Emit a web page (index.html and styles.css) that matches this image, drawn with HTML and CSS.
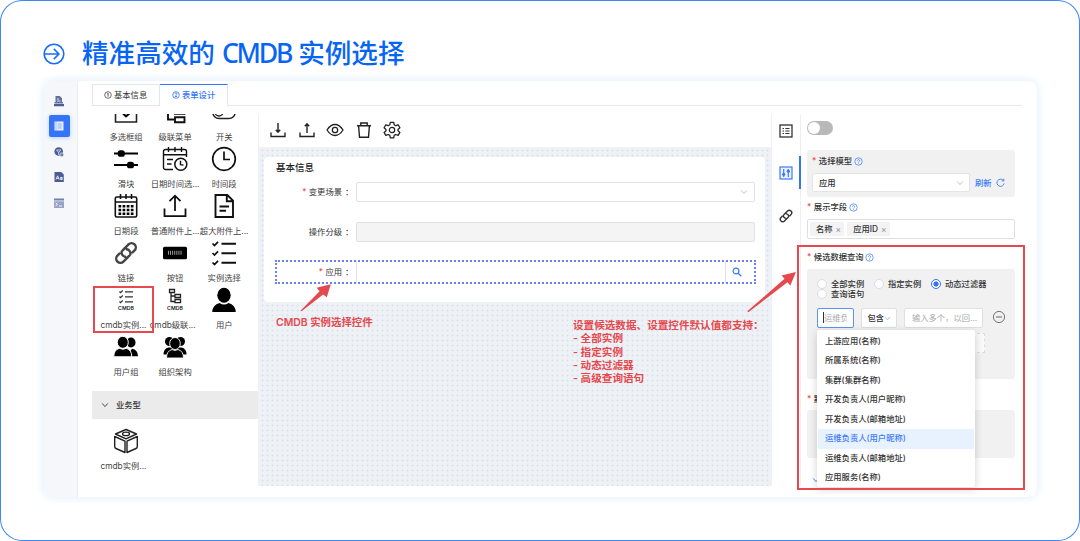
FILE: index.html
```html
<!DOCTYPE html>
<html lang="zh-CN">
<head>
<meta charset="utf-8">
<title>精准高效的 CMDB 实例选择</title>
<link rel="stylesheet" href="styles.css">
</head>
<body>
<svg width="0" height="0" class="defs">
  <symbol id="help" viewBox="0 0 10 10"><circle cx="5" cy="5" r="4.1" fill="none" stroke="currentColor" stroke-width=".8"/><path d="M3.7 4.1a1.3 1.2 0 1 1 1.9 1.1q-.6.3-.6.8M5 6.8v.8" fill="none" stroke="currentColor" stroke-width=".8"/></symbol>
  <symbol id="chev" viewBox="0 0 10 10"><path d="M1.500 3 5 7l3.500-4" fill="none" stroke="currentColor" stroke-width="1.100"/></symbol>
  <symbol id="link" viewBox="0 0 26 26"><g fill="none" stroke="currentColor" stroke-width="2.600" stroke-linecap="round" transform="rotate(-45 13 13)"><path d="M12.500 8.400H21.500a4.600 4.600 0 0 1 0 9.200h-3M13.500 17.600H4.500a4.600 4.600 0 0 1 0-9.200h3M10.800 8.600a4.600 4.600 0 0 0-1.300 6.600M15.200 17.400a4.600 4.600 0 0 0 1.300-6.600"/></g></symbol>
</svg>
<div class="frame">
  <header class="head">
    <svg class="head-icon" viewBox="0 0 22 22"><g fill="none" stroke="#1b6ef3" stroke-width="1.600"><circle cx="11" cy="11" r="9.800"/><path d="M1.500 11h14.200M10.800 5.900l5.100 5.100-5.100 5.100"/></g></svg>
    <h1 class="title">精准高效的 <span class="title-en">CMDB</span> 实例选择</h1>
  </header>
  <section class="app">
    <nav class="rail">
      <svg class="rail-icon" viewBox="0 0 12 12"><path d="M2.500 1h4.300L9 3.200V7h1v1.500H1.500V7h1z" fill="#64719f"/><path d="M1 9h10v2.200H1z" fill="#4c5c96"/><path d="M4 4h2M4 6h3.500" stroke="#fff" stroke-width=".8"/></svg>
      <span class="rail-active"><svg class="rail-icon" viewBox="0 0 12 12"><path d="M1.500 1.500h9v9h-9z" fill="#e8f0ff"/><path d="M3 1.500v9" stroke="#709ff9" stroke-width=".6"/><path d="M4.700 4h4M4.700 6h4M4.700 8h4" stroke="#6f9df8" stroke-width=".8"/></svg></span>
      <svg class="rail-icon" viewBox="0 0 12 12"><circle cx="5.700" cy="5.500" r="4.300" fill="#4c5c96"/><path d="M3.500 4h4.300L5.700 6.500zM5.700 6v3" stroke="#dce2f3" stroke-width=".8" fill="none"/><circle cx="8.800" cy="8.800" r="2" fill="#7581ad" stroke="#f5f7fb" stroke-width=".6"/></svg>
      <svg class="rail-icon" viewBox="0 0 12 12"><path d="M1.500 1h6.700l2.600 2.600V11H1.500z" fill="#4c5c96"/><path d="M3 8.500 4.600 4.800l1.600 3.700M3.600 7.300h2M9 6.200v2.500M7.300 7.500a.9.900 0 1 0 1.700 0 .9.900 0 1 0-1.700 0" stroke="#fff" stroke-width=".8" fill="none"/></svg>
      <svg class="rail-icon" viewBox="0 0 12 12"><path d="M1 1.500h10v2H1z" fill="#7380ab"/><path d="M1 4.200h10V11H1z" fill="#98a3c6"/><path d="m2.500 5.800 2 1.500-2 1.500M6 9h3" stroke="#fff" stroke-width=".9" fill="none"/></svg>
    </nav>
    <div class="main">
      <div class="tabs">
        <div class="tab"><svg class="num" viewBox="0 0 8 8"><circle cx="4" cy="4" r="3.300" fill="none" stroke="currentColor" stroke-width=".7"/><path d="M3.300 2.900 4.100 2.200v3.500" fill="none" stroke="currentColor" stroke-width=".8"/></svg>基本信息</div>
        <div class="tab tab-on"><svg class="num" viewBox="0 0 8 8"><circle cx="4" cy="4" r="3.300" fill="none" stroke="currentColor" stroke-width=".8"/><path d="M3 2.900a1 1 0 0 1 2 0Q5 3.600 3 5.500h2.200" fill="none" stroke="currentColor" stroke-width=".8"/></svg>表单设计</div>
        <div class="tab-rest"></div>
      </div>
      <div class="work">
        <aside class="palette">
          <div class="grid">
            <div class="cell"><svg class="ico" viewBox="0 0 26 26"><path d="M2.500 4v19h21V4z" fill="none" stroke="#222" stroke-width="1.600"/><path d="m9.500 14 3.500 3.300 4-3.300" fill="none" stroke="#000" stroke-width="2"/></svg><span>多选框组</span></div>
            <div class="cell"><svg class="ico" viewBox="0 0 26 26"><path d="M6 5v15.500h6M6 13.200h6" fill="none" stroke="#111" stroke-width="1.900"/><path d="M13 18.200h9.500v5H13zM13 10.200h9.500v4.500H13z" fill="#fff" stroke="#111" stroke-width="1.900"/></svg><span>级联菜单</span></div>
            <div class="cell"><svg class="ico" viewBox="0 0 26 26"><rect x="1.800" y="7" width="22.400" height="12.500" rx="6.250" fill="none" stroke="#222" stroke-width="1.500"/><circle cx="8" cy="13" r="4" fill="none" stroke="#222" stroke-width="1.400"/></svg><span>开关</span></div>

            <div class="cell"><svg class="ico" viewBox="0 0 26 26"><path d="M1 7.500h24M1 19h24" stroke="#000" stroke-width="1.800"/><rect x="4.800" y="4.200" width="7" height="6.600" rx="2.600"/><rect x="14" y="15.700" width="7" height="6.600" rx="2.600"/></svg><span>滑块</span></div>
            <div class="cell"><svg class="ico" viewBox="0 0 26 26"><path d="M11 23.500H3.500a2 2 0 0 1-2-2V5.500a2 2 0 0 1 2-2h19a2 2 0 0 1 2 2V11M1.500 8.800h23M6.500 1v5M13 1v5M19.500 1v5M5 13.500h6M5 18h4.500" fill="none" stroke="#111" stroke-width="1.400"/><circle cx="18.800" cy="18.300" r="6" fill="#fff" stroke="#111" stroke-width="1.500"/><path d="M18.500 14.800v3.800l3 .500" fill="none" stroke="#111" stroke-width="1.400"/></svg><span>日期时间选...</span></div>
            <div class="cell"><svg class="ico" viewBox="0 0 26 26"><circle cx="13" cy="13" r="11.300" fill="none" stroke="#111" stroke-width="1.700"/><path d="M13 5.500v8h6" fill="none" stroke="#111" stroke-width="1.700"/></svg><span>时间段</span></div>

            <div class="cell"><svg class="ico" viewBox="0 0 26 26"><rect x="2.300" y="4" width="21.400" height="20" rx="1.500" fill="none" stroke="#111" stroke-width="1.600"/><path d="M2.300 9h21.400M7.500 1v5M13 1v5M18.500 1v5" stroke="#111" stroke-width="1.600"/><path d="M5.500 13.200h15M5.500 17h15M5.500 20.800h15" stroke="#000" stroke-width="2.400" stroke-dasharray="2.700 1.400"/></svg><span>日期段</span></div>
            <div class="cell"><svg class="ico" viewBox="0 0 26 26"><path d="M2.500 15.500v7.700h21v-7.700M13 18V3M7.500 8.200 13 2.700l5.500 5.500" fill="none" stroke="#111" stroke-width="1.800"/></svg><span>普通附件上...</span></div>
            <div class="cell"><svg class="ico" viewBox="0 0 26 26"><path d="M4.500 2h11.800l5.700 5.700V24H4.500zM15.800 2.500v5.700h5.700" fill="none" stroke="#111" stroke-width="1.900"/><path d="M8.500 13.500h9.500M8.500 17.800h6.500" stroke="#111" stroke-width="2"/></svg><span>超大附件上...</span></div>

            <div class="cell"><svg class="ico" viewBox="0 0 26 26"><use href="#link" x="1" y="1" width="24" height="24"/></svg><span>链接</span></div>
            <div class="cell"><svg class="ico" viewBox="0 0 26 26"><rect x="1" y="6.800" width="24" height="12.500" rx="1.500"/><path d="M6 12.800h14.500" stroke="#aaa" stroke-width="4" stroke-dasharray=".9 1.200"/></svg><span>按钮</span></div>
            <div class="cell"><svg class="ico" viewBox="0 0 26 26"><path d="m1.500 3.500 2 2L7 1.800M1.500 13l2 2L7 11.300M1.500 22.500l2 2L7 20.800" fill="none" stroke="#111" stroke-width="1.700"/><path d="M10.500 3.800h14.500M10.500 13.300h14.500M10.500 22.800h14.500" stroke="#111" stroke-width="1.900"/></svg><span>实例选择</span></div>

            <div class="cell"><svg class="ico" viewBox="0 0 26 26"><path d="m6.500 4.500 1 1.200L9.800 3.500M6.500 9.500l1 1.200 2.300-2.200M6.500 14.500l1 1.200 2.300-2.200M12 4.800h8M12 9.800h8M12 14.800h8" fill="none" stroke="#333" stroke-width="1.200"/><text x="13" y="22.500" class="ico-text">CMDB</text></svg><span class="pull">cmdb实例...</span></div>
            <div class="cell"><svg class="ico" viewBox="0 0 26 26"><path d="M7.500 2.500h5v3h-5zM9 5.500v9h4M9 9h4M13 7.500h5.500v3H13zM13 12.500h5.500v3.200H13z" fill="none" stroke="#222" stroke-width="1.300"/><text x="13" y="22.500" class="ico-text">CMDB</text></svg><span class="pull">cmdb级联...</span></div>
            <div class="cell"><svg class="ico" viewBox="0 0 26 26"><ellipse cx="13" cy="8.300" rx="6.700" ry="7.500"/><path d="M1.200 25q.3-7 7.300-9 4.500 3 9 0 7 2 7.300 9z"/></svg><span>用户</span></div>

            <div class="cell"><svg class="ico" viewBox="0 0 26 26"><ellipse cx="18" cy="8.500" rx="4.500" ry="5"/><path d="M14 22.300h11q0-6.500-6-7.500z"/><g stroke="#fff" stroke-width="1"><ellipse cx="9.800" cy="8.300" rx="5.500" ry="6"/><path d="M.8 22.800q0-7 5.600-8.500 3.500 2 6.800 0 5.600 1.500 5.600 8.500z"/></g></svg><span>用户组</span></div>
            <div class="cell"><svg class="ico" viewBox="0 0 26 26"><circle cx="7.500" cy="7.500" r="4.500"/><circle cx="18.500" cy="7.500" r="4.500"/><path d="M1.500 20.500q0-6 5-7h13q5 1 5 7z"/><g stroke="#fff" stroke-width=".9"><ellipse cx="13" cy="9.500" rx="5.300" ry="6"/><path d="M4.500 24q0-7 5.500-8.500 3 2 6 0 5.500 1.500 5.500 8.500z"/></g></svg><span>组织架构</span></div>
          </div>
          <div class="group"><svg class="chev" viewBox="0 0 10 10"><use href="#chev"/></svg>业务型</div>
          <div class="grid grid-2">
            <div class="cell"><svg class="ico" viewBox="0 0 26 26"><path d="M13 1.500 23.500 6 13 10.800 2.500 6zM1.700 8.500 12 13.200V24.500L3 20.500q-1.300-.5-1.300-2zM24.300 8.500 14 13.200V24.500l9-4q1.300-.5 1.300-2z" fill="none" stroke="#222" stroke-width="1.400" stroke-linejoin="round"/><ellipse cx="13" cy="5.900" rx="3.500" ry="1.700" fill="none" stroke="#222" stroke-width="1.300"/></svg><span class="pull">cmdb实例...</span></div>
          </div>
        </aside>

        <div class="center">
          <div class="tools">
            <svg class="tool" viewBox="0 0 18 18"><path d="M2 11.500v4h14v-4M9 2v9M6.800 8.800 9 11.200l2.200-2.400" fill="none" stroke="#222" stroke-width="1.400"/></svg>
            <svg class="tool" viewBox="0 0 18 18"><path d="M2 11.500v4h14v-4M9 12V3M6.800 5.200 9 2.800l2.200 2.400" fill="none" stroke="#222" stroke-width="1.400"/></svg>
            <svg class="tool" viewBox="0 0 18 18"><path d="M1 9q3.500-5.500 8-5.500T17 9q-3.500 5.500-8 5.500T1 9z" fill="none" stroke="#222" stroke-width="1.300"/><circle cx="9" cy="9" r="2.700" fill="none" stroke="#222" stroke-width="1.300"/></svg>
            <svg class="tool" viewBox="0 0 18 18"><path d="M2 4.800h14M5.800 4.500V2h6.400v2.500M3.600 5l.9 11.200h9L14.400 5" fill="none" stroke="#222" stroke-width="1.400"/></svg>
            <svg class="tool" viewBox="0 0 18 18"><path d="M7.300 1.300h3.400l.5 2.500 1.600.9 2.400-.9 1.700 3-1.900 1.600v1.400l1.900 1.600-1.700 3-2.400-.9-1.600.9-.5 2.400H7.300l-.5-2.400-1.600-.9-2.400.9-1.700-3L3 9.800V8.400L1.100 6.800l1.700-3 2.400.9 1.600-.9z" fill="none" stroke="#222" stroke-width="1.300" stroke-linejoin="round"/><circle cx="9" cy="9" r="2.700" fill="none" stroke="#222" stroke-width="1.200"/></svg>
          </div>
          <div class="canvas">
            <div class="form">
              <div class="form-title">基本信息</div>
              <div class="row"><div class="lab"><i>*</i>变更场景<b>：</b></div><div class="inp"><svg class="chev grey" viewBox="0 0 10 10"><use href="#chev"/></svg></div></div>
              <div class="row"><div class="lab">操作分级<b>：</b></div><div class="inp inp-off"></div></div>
              <div class="row row-sel"><div class="lab"><i>*</i>应用<b>：</b></div><div class="inp-open"></div><div class="find"><svg class="find-ico" viewBox="0 0 10 10"><circle cx="4" cy="4" r="2.900" fill="none" stroke="#3d7bf7" stroke-width="1.200"/><path d="m6 6 3.300 3.300" stroke="#3d7bf7" stroke-width="1.300"/></svg></div></div>
            </div>
          </div>
        </div>

        <div class="modes">
          <svg class="mode" viewBox="0 0 14 14"><rect x="1" y="1" width="12" height="12" fill="none" stroke="#333" stroke-width="1.300"/><path d="M3.500 4.500H5M3.500 7H5M3.500 9.500H5M6.300 4.500h4.200M6.300 7h4.200M6.300 9.500h4.200" stroke="#333" stroke-width="1.100"/></svg>
          <div class="mode-on"><svg class="mode" viewBox="0 0 14 14"><rect x="1" y="1" width="12" height="12" fill="#eaf2ff" stroke="#3d7bf7" stroke-width="1.200"/><path d="M4.700 3v8M9.300 3v8" stroke="#3d7bf7" stroke-width="1.200"/><circle cx="4.700" cy="8.300" r="1.600" fill="#3d7bf7"/><circle cx="9.300" cy="5.200" r="1.600" fill="#3d7bf7"/></svg></div>
          <svg class="mode" viewBox="0 0 26 26"><use href="#link"/></svg>
        </div>

        <div class="props">
          <div class="switch"><span></span></div>
          <div class="box box-model">
            <div class="cap"><i>*</i>选择模型<svg class="help" viewBox="0 0 10 10"><use href="#help"/></svg></div>
            <div class="line">
              <div class="select">应用<svg class="chev grey" viewBox="0 0 10 10"><use href="#chev"/></svg></div>
              <span class="refresh">刷新</span>
              <svg class="reload" viewBox="0 0 10 10"><path d="M8.300 2.900A4 4 0 1 0 9 6M8.700.8v2.500H6.300" fill="none" stroke="#3d7bf7" stroke-width="1"/></svg>
            </div>
          </div>
          <div class="cap cap-show"><i>*</i>展示字段<svg class="help" viewBox="0 0 10 10"><use href="#help"/></svg></div>
          <div class="tags"><span class="tag">名称<em>×</em></span><span class="tag">应用ID<em>×</em></span></div>
          <div class="cap cap-query"><i>*</i>候选数据查询<svg class="help" viewBox="0 0 10 10"><use href="#help"/></svg></div>
          <div class="box box-query">
            <div class="radios">
              <label class="radio"><span class="dot"></span>全部实例</label>
              <label class="radio"><span class="dot"></span>指定实例</label>
              <label class="radio"><span class="dot dot-on"></span>动态过滤器</label>
              <label class="radio"><span class="dot"></span>查询语句</label>
            </div>
            <div class="filter">
              <div class="f1"><span>运维负</span></div>
              <div class="f2">包含<svg class="f2-chev" viewBox="0 0 10 10"><use href="#chev"/></svg></div>
              <div class="f3">输入多个，以回...</div>
              <svg class="minus" viewBox="0 0 14 14"><circle cx="7" cy="7" r="5.600" fill="none" stroke="#666" stroke-width=".9"/><path d="M4 7h6" stroke="#666" stroke-width="1"/></svg>
            </div>
            <div class="add"></div>
          </div>
          <div class="cap cap-def"><i>*</i>默</div>
          <div class="box box-def"></div>
          <svg class="more" viewBox="0 0 10 10"><use href="#chev"/></svg>
        </div>
      </div>
    </div>
  </section>

  <ul class="menu">
    <li>上游应用(名称)</li>
    <li>所属系统(名称)</li>
    <li>集群(集群名称)</li>
    <li>开发负责人(用户昵称)</li>
    <li>开发负责人(邮箱地址)</li>
    <li class="on">运维负责人(用户昵称)</li>
    <li>运维负责人(邮箱地址)</li>
    <li>应用服务(名称)</li>
  </ul>

  <div class="mark mark-left"></div>
  <div class="mark mark-right"></div>
  <div class="note note-a">CMDB 实例选择控件</div>
  <div class="note note-b">设置候选数据、设置控件默认值都支持：<br>- 全部实例<br>- 指定实例<br>- 动态过滤器<br>- 高级查询语句</div>
  <svg class="arrows" viewBox="0 0 1080 541"><g fill="#e5484d"><path d="M300.500 310.800 319.600 291.200 316.600 287.800 330.800 284.200 326.800 297.300 323.200 294.500 301.500 311.300z"/><path d="M747.300 311.300 784.500 278.800 781.600 275.500 796 272 790.300 285.600 787.500 282.300 748.300 312.200z"/></g></svg>
</div>
</body>
</html>
```

FILE: styles.css
```css
* { box-sizing: border-box; }
body {
  margin: 0;
  background: #fff;
  font-family: Inter, "Noto Sans CJK SC", sans-serif;
  font-size: 8.3px;
  line-height: 12px;
  color: #333;
}
svg { display: block; flex: none; overflow: visible; }
i, em, b { font-style: normal; font-weight: inherit; }
.defs { position: absolute; }

.frame {
  position: relative;
  width: 1080px;
  height: 541px;
  border-radius: 22px;
  box-shadow: inset 0 0 0 1px #3f86f5;
  overflow: hidden;
}
.head { display: flex; align-items: flex-start; gap: 17px; height: 81px; padding: 26px 0 0 43px; }
.head-icon { width: 22px; height: 22px; margin-top: 17px; }
.title {
  margin: 7px 0 0;
  font-family: "Noto Sans", "Noto Sans CJK SC", sans-serif;
  font-size: 26.600px;
  line-height: 40px;
  font-weight: 500;
  color: #0765f5;
  white-space: nowrap;
}
.title-en { letter-spacing: -2.200px; }

.app {
  display: flex;
  width: 993px;
  height: 416px;
  margin-left: 44px;
  border-radius: 9px;
  background: #fff;
  box-shadow: 0 0 10px 1px #e1effd;
  overflow: hidden;
}
.rail {
  width: 34px;
  background: #f5f7fb;
  border-right: 1px solid #ebedf2;
  display: flex;
  flex-direction: column;
  align-items: center;
  padding: 14px 3px 0 0;
  gap: 13.400px;
}
.rail-icon { width: 12px; height: 12px; }
.rail-active {
  display: flex;
  align-items: center;
  justify-content: center;
  width: 21px;
  height: 22px;
  margin: -5px 0;
  border-radius: 2px;
  background: #3574f6;
  box-shadow: 0 1px 4px #b9cffb;
}
.main { flex: 1; min-width: 0; padding: 3px 15px 0 14px; }
.tabs { display: flex; height: 22px; }
.tab {
  display: flex;
  align-items: center;
  gap: 2px;
  width: 68px;
  padding: 0 0 1px 11px;
  border: 1px solid #e4e6ea;
  white-space: nowrap;
}
.tab-on {
  width: 68px;
  padding-left: 12px;
  border-top: 1px solid #3574f6;
  border-bottom: 0;
  border-left: 0;
  color: #3574f6;
  font-weight: 500;
}
.num { width: 8px; height: 8px; }
.tab-rest { flex: 1; border-bottom: 1px solid #e8eaee; }

.work { display: flex; height: 372px; margin-top: 8px; }
.palette { width: 166px; overflow: hidden; }
.grid {
  display: grid;
  grid-template-columns: repeat(3, 49.100px);
  row-gap: 3px;
  margin: -15px 0 0 9.500px;
}
.grid-2 { margin-top: 9px; }
.cell { display: flex; flex-direction: column; align-items: center; gap: 5.500px; height: 44px; width: 49px; white-space: nowrap; color: #444; }
.ico { width: 26px; height: 26px; }
.ico-text { font-size: 5.200px; font-weight: 600; text-anchor: middle; fill: #222; }
.pull { margin-right: 5px; }
.group {
  display: flex;
  align-items: center;
  gap: 7px;
  height: 28px;
  margin-top: 13px;
  padding: 0 0 1px 9px;
  background: #ecebec;
  font-weight: 500;
}
.chev { width: 8px; height: 8px; }
.grey { color: #bbb; }

.center { width: 514px; display: flex; flex-direction: column; border-left: 1px solid #eef0f3; border-right: 1px solid #eef0f3; }
.tools { display: flex; gap: 10.500px; height: 33px; padding: 6.500px 0 0 10px; }
.tool { width: 18px; height: 18px; }
.canvas {
  flex: 1;
  padding: 10px 6px 0 5px;
  background: radial-gradient(circle, #dbe1e9 .8px, transparent 1.200px) 1px 1px / 5px 5px, #eef2f7;
}
.form { height: 145px; padding: 4px 10px 0 12px; border-radius: 4px; background: #fff; }
.form-title { font-size: 9.500px; font-weight: 500; line-height: 14px; color: #222; }
.row { display: flex; height: 20px; margin-top: 20px; }
.form-title + .row { margin-top: 7px; }
.lab { display: flex; justify-content: flex-end; width: 80px; line-height: 20px; white-space: nowrap; }
.lab b { width: 14px; padding-left: 3px; }
i { color: #f0484b; margin-right: 2.500px; }
.inp { flex: 1; display: flex; align-items: center; justify-content: flex-end; padding-right: 6px; border: 1px solid #dfe1e5; border-radius: 2px; }
.inp-off { background: #f4f4f4; }
.row-sel { height: 22px; margin-top: 19px; outline: 2px dotted #6a80e4; outline-offset: -1.500px; }
.row-sel .lab { line-height: 22px; }
.inp-open { flex: 1; border-left: 1px solid #e0e2e6; border-right: 1px solid #e0e2e6; }
.find { width: 29px; padding: 6px 0 0 6px; }
.find-ico { width: 10px; height: 10px; }

.modes { width: 29px; display: flex; flex-direction: column; align-items: center; padding-top: 10px; border-right: 1px solid #eeeff1; }
.mode { width: 14px; height: 14px; }
.mode-on { display: flex; align-items: center; justify-content: center; width: 29px; height: 33px; margin: 18px -1px 20px 0; border-right: 2px solid #3574f6; }

.props { width: 214px; padding-left: 6px; overflow: hidden; }
.switch { width: 26px; height: 14px; margin-top: 7px; padding: 1px; border-radius: 7px; background: #b9b9b9; }
.switch span { display: block; width: 12px; height: 12px; border-radius: 50%; background: #fff; }
.box { width: 208px; border-radius: 3px; background: #f1f1f2; }
.box-model { height: 47px; margin-top: 15px; padding: 5px 5px 0; }
.cap { display: flex; align-items: center; height: 12px; font-weight: 500; white-space: nowrap; }
.help { width: 9px; height: 9px; margin-left: 1.500px; color: #3d7bf7; }
.line { display: flex; align-items: center; margin-top: 6px; }
.select { display: flex; align-items: center; justify-content: space-between; width: 158px; height: 19px; padding: 0 5px 0 6px; border: 1px solid #e3e4e7; border-radius: 2px; background: #fff; font-weight: 500; }
.refresh { margin: 0 4px 0 5px; color: #3d7bf7; font-weight: 500; }
.reload { width: 9px; height: 9px; }
.cap-show { margin-top: 4px; }
.tags { display: flex; gap: 3px; width: 208px; height: 20px; margin-top: 6px; padding: 2px; border: 1px solid #dedfe2; border-radius: 2px; }
.tag { height: 14px; padding: 0 3px 0 6px; line-height: 14px; background: #f3f3f4; font-weight: 500; }
.tag em { margin-left: 3px; color: #999; }
.cap-query { margin-top: 12px; }
.box-query { height: 110px; margin-top: 6px; padding: 9.500px 9.500px 0; }
.radios { display: grid; grid-template-columns: 57px 57px auto; grid-auto-rows: 10px; font-weight: 500; }
.radio { display: flex; align-items: center; gap: 4.500px; height: 10px; white-space: nowrap; }
.dot { width: 10px; height: 10px; border: 1px solid #dcdde0; border-radius: 50%; background: #fff; }
.dot-on { border-color: #3574f6; background: radial-gradient(circle, #3574f6 2.300px, #fff 2.900px); }
.filter { display: flex; gap: 7px; height: 20px; margin: 9.500px 0 0 .5px; }
.filter > div { height: 20px; border: 1px solid #dedfe2; border-radius: 2px; background: #fff; line-height: 18px; white-space: nowrap; overflow: hidden; }
.filter > .f1 { width: 37px; padding: 3px 5px; border: 1.500px solid #5b94f8; color: #aaa; line-height: 12px; }
.f1 span { display: block; width: 24px; height: 11px; border-left: 1px solid #333; overflow: hidden; }
.filter > .f2 { display: flex; align-items: center; width: 37px; padding-left: 6px; font-weight: 500; }
.f2-chev { width: 7px; height: 7px; color: #aaa; }
.filter > .f3 { width: 80px; padding-left: 7px; color: #aaa; }
.minus { width: 14px; height: 14px; margin-top: 2px; margin-left: 2px; }
.add { width: 168px; height: 20px; margin: 5px 0 0 .5px; border: 1px dashed #dcdcdc; background: #fafafa; }
.cap-def { margin-top: 14px; }
.box-def { height: 48px; margin-top: 5px; }
.more { width: 8px; height: 8px; margin: 18px 0 0 5px; color: #3574f6; }

/* Floating option list */
.menu {
  position: absolute;
  left: 817px;
  top: 330px;
  width: 158px;
  height: 157px;
  margin: 0;
  padding: 2px 1px;
  list-style: none;
  background: #fff;
  border-radius: 2px;
  box-shadow: 0 2px 8px #0000002e;
}
.menu li { height: 19.450px; padding-left: 7px; line-height: 19.450px; font-weight: 500; white-space: nowrap; }
.menu .on { background: #e8f2ff; color: #3d7bf7; }

/* Annotations over the interface */
.mark { position: absolute; border: 2px solid #e8494d; }
.mark-left { left: 93px; top: 286px; width: 61px; height: 47px; }
.mark-right { left: 797px; top: 245px; width: 228px; height: 245px; }
.note { position: absolute; color: #e5484d; font-weight: 600; line-height: 13.300px; white-space: nowrap; }
.note-a { left: 276px; top: 316px; font-size: 10.400px; }
.note-b { left: 573px; top: 319px; font-size: 10.600px; }
.arrows { position: absolute; inset: 0; width: 1080px; height: 541px; }
```
